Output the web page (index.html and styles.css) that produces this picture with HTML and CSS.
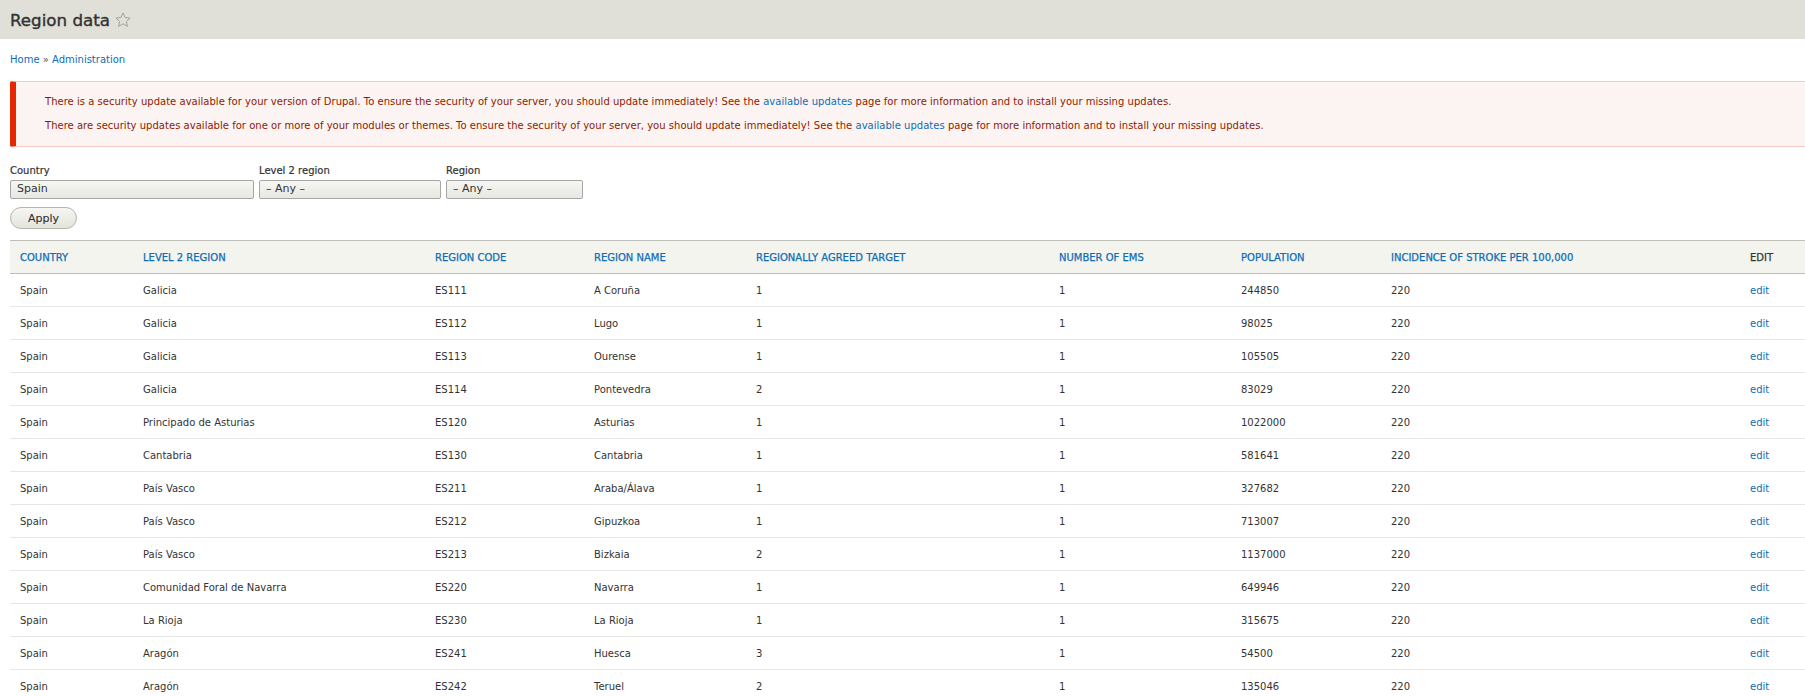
FILE: index.html
```html
<!DOCTYPE html>
<html lang="en">
<head>
    <meta charset="UTF-8">
    <title>Region data</title>
    <link rel="stylesheet" href="styles.css">
</head>
<body>
<header class="page-head">
    <h1>Region data</h1>
    <svg class="star" viewBox="0 0 20 20" width="16" height="16"><path d="M10 1.2l2.6 5.7 6.2.7-4.6 4.2 1.3 6.1-5.5-3.1-5.5 3.1 1.3-6.1-4.6-4.2 6.2-.7z"/></svg>
</header>
<div class="breadcrumb"><a href="#">Home</a> » <a href="#">Administration</a></div>
<div class="messages">
    <p>There is a security update available for your version of Drupal. To ensure the security of your server, you should update immediately! See the <a href="#">available updates</a> page for more information and to install your missing updates.</p>
    <p>There are security updates available for one or more of your modules or themes. To ensure the security of your server, you should update immediately! See the <a href="#">available updates</a> page for more information and to install your missing updates.</p>
</div>
<form class="filters">
    <div class="filter-row">
        <div class="filter">
            <label>Country</label>
            <div class="select select-country">Spain</div>
        </div>
        <div class="filter">
            <label>Level 2 region</label>
            <div class="select select-level">– Any –</div>
        </div>
        <div class="filter">
            <label>Region</label>
            <div class="select select-region">– Any –</div>
        </div>
    </div>
    <button type="button" class="apply">Apply</button>
</form>
<table class="regions">
    <colgroup>
        <col class="c1"><col class="c2"><col class="c3"><col class="c4"><col class="c5"><col class="c6"><col class="c7"><col class="c8"><col class="c9">
    </colgroup>
    <thead>
        <tr>
            <th><a href="#">Country</a></th>
            <th><a href="#">Level 2 region</a></th>
            <th><a href="#">Region code</a></th>
            <th><a href="#">Region name</a></th>
            <th><a href="#">Regionally agreed target</a></th>
            <th><a href="#">Number of EMS</a></th>
            <th><a href="#">Population</a></th>
            <th><a href="#">Incidence of stroke per 100,000</a></th>
            <th>Edit</th>
        </tr>
    </thead>
    <tbody>
        <tr><td>Spain</td><td>Galicia</td><td>ES111</td><td>A Coruña</td><td>1</td><td>1</td><td>244850</td><td>220</td><td><a href="#">edit</a></td></tr>
        <tr><td>Spain</td><td>Galicia</td><td>ES112</td><td>Lugo</td><td>1</td><td>1</td><td>98025</td><td>220</td><td><a href="#">edit</a></td></tr>
        <tr><td>Spain</td><td>Galicia</td><td>ES113</td><td>Ourense</td><td>1</td><td>1</td><td>105505</td><td>220</td><td><a href="#">edit</a></td></tr>
        <tr><td>Spain</td><td>Galicia</td><td>ES114</td><td>Pontevedra</td><td>2</td><td>1</td><td>83029</td><td>220</td><td><a href="#">edit</a></td></tr>
        <tr><td>Spain</td><td>Principado de Asturias</td><td>ES120</td><td>Asturias</td><td>1</td><td>1</td><td>1022000</td><td>220</td><td><a href="#">edit</a></td></tr>
        <tr><td>Spain</td><td>Cantabria</td><td>ES130</td><td>Cantabria</td><td>1</td><td>1</td><td>581641</td><td>220</td><td><a href="#">edit</a></td></tr>
        <tr><td>Spain</td><td>País Vasco</td><td>ES211</td><td>Araba/Álava</td><td>1</td><td>1</td><td>327682</td><td>220</td><td><a href="#">edit</a></td></tr>
        <tr><td>Spain</td><td>País Vasco</td><td>ES212</td><td>Gipuzkoa</td><td>1</td><td>1</td><td>713007</td><td>220</td><td><a href="#">edit</a></td></tr>
        <tr><td>Spain</td><td>País Vasco</td><td>ES213</td><td>Bizkaia</td><td>2</td><td>1</td><td>1137000</td><td>220</td><td><a href="#">edit</a></td></tr>
        <tr><td>Spain</td><td>Comunidad Foral de Navarra</td><td>ES220</td><td>Navarra</td><td>1</td><td>1</td><td>649946</td><td>220</td><td><a href="#">edit</a></td></tr>
        <tr><td>Spain</td><td>La Rioja</td><td>ES230</td><td>La Rioja</td><td>1</td><td>1</td><td>315675</td><td>220</td><td><a href="#">edit</a></td></tr>
        <tr><td>Spain</td><td>Aragón</td><td>ES241</td><td>Huesca</td><td>3</td><td>1</td><td>54500</td><td>220</td><td><a href="#">edit</a></td></tr>
        <tr><td>Spain</td><td>Aragón</td><td>ES242</td><td>Teruel</td><td>2</td><td>1</td><td>135046</td><td>220</td><td><a href="#">edit</a></td></tr>
    </tbody>
</table>
</body>
</html>
```

FILE: styles.css
```css
html {
    height: 100%;
    overflow: hidden;
}
body {
    margin: 0;
    font-family: "DejaVu Sans", Verdana, sans-serif;
    font-size: 10px;
    color: #333;
    background: #fff;
}
a {
    color: #0f6cb5;
    text-decoration: none;
}
.page-head {
    display: flex;
    align-items: center;
    height: 39px;
    padding-left: 10px;
    background: #e0e0d8;
}
.page-head h1 {
    margin: 0;
    font-size: 16.7px;
    font-weight: normal;
    color: #333;
    -webkit-text-stroke: 0.4px #333;
}
.star {
    margin-left: 5px;
    fill: none;
    stroke: #999;
    stroke-width: 1.1;
}
.breadcrumb {
    padding: 14px 10px 0;
    height: 28px;
    line-height: 14px;
    color: #555;
}
.messages {
    height: 66px;
    padding: 13px 0 0 29px;
    box-sizing: border-box;
    border: 1px solid #f9c9bf;
    border-left: 6px solid #e62600;
    border-right: 0;
    border-radius: 2px 0 0 2px;
    margin: 0 0 0 10px;
    background: #fcf4f2;
    color: #8f1a00;
    letter-spacing: 0.025px;
}
.messages p {
    margin: 0 0 10px;
    line-height: 14px;
}
.filters {
    padding: 16px 10px 0;
}
.filter-row {
    display: flex;
    gap: 5px;
}
.filter label {
    display: block;
    margin-bottom: 2px;
    font-size: 10px;
    line-height: 15px;
    color: #333;
    -webkit-text-stroke: 0.2px #333;
}
.select {
    height: 19px;
    box-sizing: border-box;
    border: 1px solid #a6a6a6;
    border-radius: 2px;
    background: linear-gradient(#f6f6f2, #e8e8e2);
    font-size: 11px;
    line-height: 16px;
    padding-left: 6px;
    color: #333;
}
.select-country { width: 244px; }
.select-level { width: 182px; }
.select-region { width: 137px; }
.apply {
    display: block;
    margin-top: 8px;
    width: 67px;
    height: 22px;
    padding: 0;
    border: 1px solid #b5b5ad;
    border-radius: 11px;
    background: linear-gradient(#f6f6f2, #e4e4dc);
    font-family: inherit;
    font-size: 11px;
    color: #333;
    -webkit-text-stroke: 0.15px #333;
}
.regions {
    table-layout: fixed;
    width: 1795px;
    margin: 11px 0 0 10px;
    border-collapse: collapse;
}
.c1 { width: 123px; }
.c2 { width: 292px; }
.c3 { width: 159px; }
.c4 { width: 162px; }
.c5 { width: 303px; }
.c6 { width: 182px; }
.c7 { width: 150px; }
.c8 { width: 359px; }
.regions th {
    height: 32px;
    padding: 0 10px;
    text-align: left;
    text-transform: uppercase;
    font-weight: normal;
    -webkit-text-stroke: 0.25px;
    background: #f3f4ee;
    border-top: 1px solid #bebfb9;
    border-bottom: 1px solid #bebfb9;
}
.regions td {
    height: 32px;
    padding: 0 10px;
    border-bottom: 1px solid #e6e6e4;
}
```
